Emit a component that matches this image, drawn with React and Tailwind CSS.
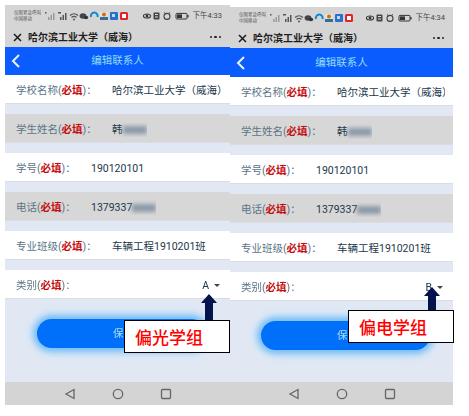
const FONT = "font-['Roboto','Noto_Sans_CJK_SC',sans-serif]";

function StatusIcons() {
  return (
    <svg width="88" height="10" viewBox="0 0 88 10" className="shrink-0">
      <g fill="#9a9a9a"><rect x="0" y="1" width="1.5" height="1.5" fill="#555" /><rect x="3" y="6" width="1.5" height="3" /><rect x="5.5" y="4" width="1.5" height="5" /><rect x="8" y="2" width="1.5" height="7" /></g>
      <g fill="#555"><rect x="13" y="1" width="3" height="1.5" /><rect x="15" y="6" width="1.5" height="3" /><rect x="17.5" y="4" width="1.5" height="5" /><rect x="20" y="2" width="1.5" height="7" /></g>
      <path d="M25 4.5a6 6 0 0 1 8 0M26.5 6.5a3.6 3.6 0 0 1 5 0" fill="none" stroke="#555" strokeWidth="1.2" />
      <circle cx="29" cy="8.5" r="1" fill="#555" />
      <ellipse cx="38" cy="5" rx="3.4" ry="2.8" fill="#444" />
      <ellipse cx="41" cy="6.5" rx="2.2" ry="1.8" fill="#333" />
      <path d="M46 6a3.4 3.4 0 1 1 6.5 0" fill="none" stroke="#0a86d8" strokeWidth="2" />
      <rect x="55" y="1" width="8" height="8" fill="#e8e2c8" />
      <circle cx="59" cy="3.6" r="2" fill="#c9702a" />
      <rect x="55" y="6" width="8" height="3" fill="#2e6f9e" />
      <rect x="65" y="1" width="8" height="8" rx="1" fill="#2a6fc9" />
      <rect x="67" y="3" width="3" height="3" fill="#b8dcf5" />
      <rect x="75" y="1" width="8" height="8" rx="1.5" fill="#e0232e" />
      <rect x="77" y="3" width="4" height="4" fill="#fff" />
    </svg>
  );
}

function StatusRight({ time }) {
  return (
    <div className="flex items-center gap-[4px] ml-auto">
      <svg width="46" height="10" viewBox="0 0 46 10">
        <ellipse cx="4" cy="5" rx="3.6" ry="2" fill="none" stroke="#333" strokeWidth="1.1" />
        <circle cx="4" cy="5" r="1.4" fill="#333" />
        <rect x="10.5" y="1.5" width="6" height="7" rx="1" fill="#444" />
        <rect x="12" y="3" width="3" height="1" fill="#ddd" />
        <rect x="12" y="5.5" width="3" height="1" fill="#ddd" />
        <circle cx="24" cy="5.4" r="3" fill="none" stroke="#444" strokeWidth="1.1" />
        <path d="M21 1.5l1.5 1M27 1.5l-1.5 1" stroke="#444" />
        <rect x="33" y="2.4" width="11" height="5.6" rx="1" fill="none" stroke="#333" />
        <rect x="34" y="3.4" width="5" height="3.6" fill="#333" />
        <rect x="44.4" y="4" width="1.2" height="2.4" fill="#333" />
      </svg>
      <span className="text-[7.5px] text-[#444]">{time}</span>
    </div>
  );
}

function Req() {
  return <span className="text-[#c40d0d] font-bold">必填</span>;
}

function Row({ label, value, gray, wide, blur, select, first }) {
  return (
    <div className={`h-[29px] flex items-center pt-[3px] pl-[11px] pr-[8px] border-b border-[#d9dde3] ${first ? "" : "mt-[10px]"} ${gray ? "bg-[#d7d7d7]" : "bg-white"}`}>
      <div className={`shrink-0 text-[10.5px] text-[#5b7487] ${wide ? "w-[96px]" : "w-[75px]"}`}>
        {label}(<Req />)：
      </div>
      <div className="flex items-center min-w-0 text-[10.5px] text-[#22374a] whitespace-nowrap overflow-hidden">
        {value}
        {blur && <span className="inline-block h-[8px] w-[24px] bg-[#8b99a8] blur-[2px]" />}
      </div>
      {select && (
        <div className="ml-auto mr-[2px] flex items-center gap-[5px] text-[10.5px] text-[#22374a]">
          {select}
          <span className="w-0 h-0 border-x-[3px] border-x-transparent border-t-[3px] border-t-[#444]" />
        </div>
      )}
    </div>
  );
}

function Panel({ time, select, statusH, blueH, width }) {
  return (
    <div className={`${width} h-full flex flex-col bg-[#e1e8f4] blur-[0.4px]`}>
      <div className={`${statusH} shrink-0 bg-[#d5d5d5] flex items-center pl-[9px] pr-[8px]`}>
        <div className="w-[31px] shrink-0 text-[4.5px] leading-[6px] text-[#555]">
          <div className="whitespace-nowrap">仅限紧急呼叫</div>
          <div>中国移动</div>
        </div>
        <StatusIcons />
        <StatusRight time={time} />
      </div>
      <div className="h-[20px] shrink-0 bg-[#d5d5d5] flex items-center pl-[7px] pr-[9px]">
        <svg width="11" height="11" viewBox="0 0 11 11" className="mr-[5px]"><path d="M2 2l7 7M9 2l-7 7" stroke="#1a1a1a" strokeWidth="1.5" /></svg>
        <span className="text-[10px] font-bold text-[#1f1f1f] whitespace-nowrap">哈尔滨工业大学（威海）</span>
        <span className="ml-auto flex gap-[2px]">
          <i className="w-[2.5px] h-[2.5px] rounded-full bg-[#222]" />
          <i className="w-[2.5px] h-[2.5px] rounded-full bg-[#222]" />
          <i className="w-[2.5px] h-[2.5px] rounded-full bg-[#222]" />
        </span>
      </div>
      <div className={`${blueH} shrink-0 bg-[#0a5cff] flex items-center relative`}>
        <svg width="11" height="16" viewBox="0 0 11 16" className="absolute left-[5px]"><path d="M9 2L3 8l6 6" fill="none" stroke="#eaf3ff" strokeWidth="2" /></svg>
        <div className="w-full text-center text-[10.5px] text-[#8fdcf5]">编辑联系人</div>
      </div>
      <Row first label="学校名称" wide value="哈尔滨工业大学（威海）" />
      <Row gray label="学生姓名" wide value="韩" blur />
      <Row label="学号" value="190120101" />
      <Row gray label="电话" value="1379337" blur />
      <Row label="专业班级" wide value="车辆工程1910201班" />
      <Row label="类别" select={select} />
      <div className="flex-1 flex items-start justify-center pt-[20px] pl-[7px]">
        <div className="w-[169px] h-[29px] pl-[5px] rounded-full bg-[#0070fb] shadow-[0_0_6px_4px_#74bdf5,0_0_12px_7px_#d3e5f6] flex items-center justify-center text-[10.5px] text-[#a6e0f7]">
          保存
        </div>
      </div>
      <div className="h-[23px] shrink-0 bg-[#d4d4d4] flex items-center justify-center gap-[34px]">
        <svg width="14" height="12" viewBox="0 0 14 12"><path d="M11 1.5v9L3 6z" fill="none" stroke="#666" strokeWidth="1.3" /></svg>
        <svg width="14" height="12" viewBox="0 0 14 12"><circle cx="7" cy="6" r="4.7" fill="none" stroke="#666" strokeWidth="1.3" /></svg>
        <svg width="14" height="12" viewBox="0 0 14 12"><rect x="2.5" y="1.5" width="9" height="9" rx="1" fill="none" stroke="#666" strokeWidth="1.3" /></svg>
      </div>
    </div>
  );
}

function Callout({ text, className }) {
  return (
    <div className={`absolute w-[106px] h-[33px] bg-white border border-black flex items-center pl-[10px] text-[17px] leading-none font-medium text-[#f00] font-['Noto_Sans_CJK_SC',sans-serif] ${className}`}>
      {text}
    </div>
  );
}

function Arrow({ className }) {
  return (
    <svg width="18" height="26" viewBox="0 0 18 26" className={`absolute ${className}`}>
      <path d="M9 0L17 9H13V26H5V9H1z" fill="#04124d" />
    </svg>
  );
}

export default function App() {
  return (
    <div className={`relative w-[469px] h-[416px] bg-white overflow-hidden ${FONT}`}>
      <div className="flex items-end h-[405px] pl-[5px]">
        <div className="h-[400px]">
          <Panel time="下午4:33" select="A" statusH="h-[22px]" blueH="h-[28px]" width="w-[225px]" />
        </div>
        <div className="h-[398px]">
          <Panel time="下午4:34" select="B" statusH="h-[21px]" blueH="h-[29px]" width="w-[223px]" />
        </div>
      </div>
      <Arrow className="left-[200px] top-[294px]" />
      <Arrow className="left-[423px] top-[287px]" />
      <Callout text="偏光学组" className="left-[124px] top-[320px]" />
      <Callout text="偏电学组" className="left-[348px] top-[310px]" />
    </div>
  );
}
